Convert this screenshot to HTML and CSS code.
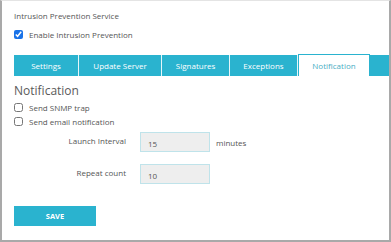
FILE: index.html
```html
<!DOCTYPE html>
<html lang="en">
<head>
  <meta charset="UTF-8" />
  <title>Intrusion Prevention Service</title>
  <link rel="stylesheet" href="styles.css">
</head>
<body>
  <div class="panel">
    <div class="title">Intrusion Prevention Service</div>
    <label class="check">
      <input type="checkbox" checked>
      <span>Enable Intrusion Prevention</span>
    </label>

    <div class="tabs">
      <div class="tab">Settings</div>
      <div class="tab">Update Server</div>
      <div class="tab">Signatures</div>
      <div class="tab">Exceptions</div>
      <div class="tab active">Notification</div>
      <div class="tab-fill"></div>
    </div>

    <h2>Notification</h2>
    <label class="check small">
      <input type="checkbox">
      <span>Send SNMP trap</span>
    </label>
    <label class="check small">
      <input type="checkbox">
      <span>Send email notification</span>
    </label>

    <div class="form">
      <div class="label">Launch Interval</div>
      <input class="field" type="text" value="15">
      <div class="unit">minutes</div>
      <div class="label">Repeat count</div>
      <input class="field" type="text" value="10">
      <div class="unit"></div>
    </div>

    <button class="save">SAVE</button>
  </div>
</body>
</html>
```

FILE: styles.css
```css
* {
  margin: 0;
  padding: 0;
  box-sizing: border-box;
}

body {
  font-family: 'Open Sans', sans-serif;
  font-size: 8px;
  color: #555;
  background: #fff;
}

.panel {
  width: 391px;
  height: 242px;
  border: 2px solid #a9a9a9;
  border-top: 1px solid #e4e4e4;
  padding: 9px 0 0 12px;
  overflow: hidden;
}

.title {
  height: 12px;
  line-height: 12px;
}

.check {
  display: flex;
  align-items: center;
  gap: 6px;
  margin-top: 6px;
  height: 12px;
}

.check input {
  width: 9px;
  height: 9px;
  margin: 0;
  accent-color: #1a73e8;
}

.check.small {
  margin-top: 2px;
}

.tabs {
  display: flex;
  margin-top: 15px;
  height: 21px;
  background: #2ab3cf;
}

.tab {
  color: #fff;
  display: flex;
  align-items: center;
  justify-content: center;
  border-right: 1px solid #e6f6f9;
}

.tab:nth-child(1) { width: 65px; }
.tab:nth-child(2) { width: 83px; }
.tab:nth-child(3) { width: 68px; }
.tab:nth-child(4) { width: 68px; }

.tab.active {
  width: 72px;
  background: #fff;
  color: #4aaec4;
  border: 1px solid #2ab3cf;
  border-bottom: none;
  margin-top: -1px;
  height: 22px;
}

.tab-fill {
  flex: 1;
  background: #2ab3cf;
}

h2 {
  font-size: 12px;
  font-weight: 400;
  margin-top: 7px;
  line-height: 16px;
  color: #5a5a5a;
}

.form {
  display: grid;
  grid-template-columns: 112px 70px auto;
  column-gap: 14px;
  row-gap: 12px;
  margin-top: 5px;
  align-items: center;
}

.form .unit {
  margin-left: -8px;
}

.label {
  text-align: right;
  margin-top: -3px;
}

.field {
  width: 70px;
  height: 20px;
  background: #eeeeee;
  border: 1px solid #bfe3ea;
  font-family: 'Open Sans', sans-serif;
  font-size: 8px;
  color: #555;
  padding: 2px 0 0 7px;
  outline: none;
}

.save {
  display: block;
  margin-top: 22px;
  width: 82px;
  height: 20px;
  border: none;
  background: #2ab3cf;
  color: #fff;
  font-family: 'Open Sans', sans-serif;
  font-size: 7.5px;
  font-weight: 700;
}
```
